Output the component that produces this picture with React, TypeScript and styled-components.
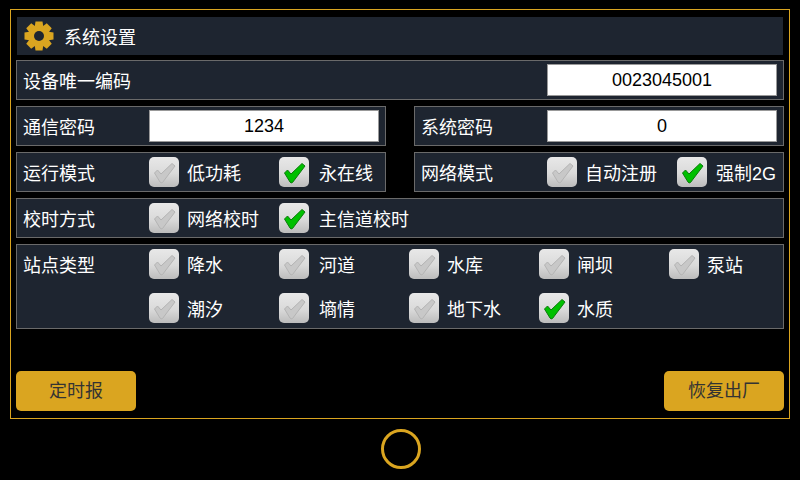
import React from "react";
import styled, { createGlobalStyle } from "styled-components";

const GlobalStyle = createGlobalStyle`
  html, body {
    margin: 0;
    padding: 0;
    background: #000;
  }
  body {
    font-family: "Liberation Sans", "Noto Sans CJK SC", sans-serif;
    font-size: 18px;
  }
`;

const Screen = styled.div`
  width: 800px;
  height: 480px;
  background: #000;
  padding: 9px 10px 0;
  box-sizing: border-box;
  overflow: hidden;
`;

const Frame = styled.div`
  height: 410px;
  box-sizing: border-box;
  border: 1px solid #daa520;
  padding: 7px 5px 7px;
  display: flex;
  flex-direction: column;
`;

const TitleBar = styled.div`
  height: 38px;
  margin: 0 1px 5px;
  flex: none;
  background: #1e2530;
  display: flex;
  align-items: center;
  padding-left: 7px;
  gap: 10px;
  color: #fff;
`;

const Rows = styled.div`
  display: flex;
  flex-direction: column;
  gap: 6px;
`;

const Panel = styled.div<{ $tall?: boolean }>`
  height: ${(p) => (p.$tall ? "85px" : "40px")};
  box-sizing: border-box;
  border: 1px solid #6a6a6a;
  background: #1e2530;
  display: flex;
  align-items: ${(p) => (p.$tall ? "flex-start" : "center")};
  padding-left: 6px;
  color: #fff;
`;

const Pair = styled.div`
  display: grid;
  grid-template-columns: 370px 370px;
  column-gap: 28px;
`;

const Label = styled.div<{ $tall?: boolean }>`
  width: 126px;
  flex: none;
  margin-top: ${(p) => (p.$tall ? "6px" : "0")};
`;

const Spacer = styled.div`
  flex: 1;
`;

const ValueBox = styled.div`
  width: 230px;
  height: 32px;
  box-sizing: border-box;
  border: 1px solid #999;
  background: #fff;
  color: #000;
  line-height: 30px;
  text-align: center;
  margin-right: 6px;
`;

const CheckGrid = styled.div`
  display: grid;
  grid-template-columns: repeat(5, 130px);
  grid-auto-rows: 30px;
  row-gap: 14px;
  margin-top: 4px;
`;

const CheckRow = styled.div`
  display: grid;
  grid-template-columns: 130px auto;
`;

const CheckItem = styled.div<{ $gap: number }>`
  display: flex;
  align-items: center;
  gap: ${(p) => p.$gap}px;
  white-space: nowrap;
`;

const Box = styled.div`
  width: 30px;
  height: 30px;
  flex: none;
  border-radius: 5px;
  background: linear-gradient(#e8e8e8, #dadada 55%, #bcbcbc);
  svg {
    display: block;
  }
`;

const Footer = styled.div`
  margin-top: auto;
  display: flex;
  justify-content: space-between;
`;

const ActionButton = styled.div`
  width: 120px;
  height: 40px;
  background: #daa520;
  border-radius: 5px;
  color: #333;
  line-height: 41px;
  text-align: center;
`;

const HomeBar = styled.div`
  display: flex;
  justify-content: center;
  padding: 10px 0 0 2px;
`;

const HomeRing = styled.div`
  width: 40px;
  height: 40px;
  box-sizing: border-box;
  border: 3px solid #daa520;
  border-radius: 50%;
`;

const gearTeeth = [0, 45, 90, 135, 180, 225, 270, 315];

const Gear = () => (
  <svg width="30" height="30" viewBox="0 0 30 30">
    <g fill="#daa520">
      {gearTeeth.map((deg) => (
        <path key={deg} d="M11.5 0.5 H18.5 L19.5 7 H10.5 Z" transform={`rotate(${deg} 15 15)`} />
      ))}
      <circle cx="15" cy="15" r="10.5" />
    </g>
    <circle cx="15" cy="15" r="5" fill="#1e2530" />
  </svg>
);

const CheckMark = ({ on }: { on: boolean }) => (
  <svg width="30" height="30" viewBox="0 0 30 30">
    <path
      d="M5.5 16 L8.5 13 L12 17 L23 6.5 L26 9 L13.5 25.5 Q12 26.5 11 25 Z"
      fill={on ? "#00c000" : "#c8c8c8"}
      stroke={on ? "#0b7a0b" : "#b4b4b4"}
      strokeWidth="1"
      strokeLinejoin="round"
    />
  </svg>
);

const Check = ({ text, on = false, gap = 8 }: { text: string; on?: boolean; gap?: number }) => (
  <CheckItem $gap={gap}>
    <Box>
      <CheckMark on={on} />
    </Box>
    <span>{text}</span>
  </CheckItem>
);

const stations = [
  { text: "降水" },
  { text: "河道", gap: 10 },
  { text: "水库" },
  { text: "闸坝" },
  { text: "泵站" },
  { text: "潮汐" },
  { text: "墒情", gap: 10 },
  { text: "地下水" },
  { text: "水质", on: true },
];

export default function App() {
  return (
    <>
      <GlobalStyle />
      <Screen>
        <Frame>
          <TitleBar>
            <Gear />
            系统设置
          </TitleBar>
          <Rows>
            <Panel>
              <Label>设备唯一编码</Label>
              <Spacer />
              <ValueBox>0023045001</ValueBox>
            </Panel>
            <Pair>
              <Panel>
                <Label>通信密码</Label>
                <ValueBox>1234</ValueBox>
              </Panel>
              <Panel>
                <Label>系统密码</Label>
                <ValueBox>0</ValueBox>
              </Panel>
            </Pair>
            <Pair>
              <Panel>
                <Label>运行模式</Label>
                <CheckRow>
                  <Check text="低功耗" />
                  <Check text="永在线" on gap={10} />
                </CheckRow>
              </Panel>
              <Panel>
                <Label>网络模式</Label>
                <CheckRow>
                  <Check text="自动注册" />
                  <Check text="强制2G" on gap={9} />
                </CheckRow>
              </Panel>
            </Pair>
            <Panel>
              <Label>校时方式</Label>
              <CheckRow>
                <Check text="网络校时" />
                <Check text="主信道校时" on gap={10} />
              </CheckRow>
            </Panel>
            <Panel $tall>
              <Label $tall>站点类型</Label>
              <CheckGrid>
                {stations.map((s) => (
                  <Check key={s.text} text={s.text} on={s.on} gap={s.gap} />
                ))}
              </CheckGrid>
            </Panel>
          </Rows>
          <Footer>
            <ActionButton>定时报</ActionButton>
            <ActionButton>恢复出厂</ActionButton>
          </Footer>
        </Frame>
        <HomeBar>
          <HomeRing />
        </HomeBar>
      </Screen>
    </>
  );
}
